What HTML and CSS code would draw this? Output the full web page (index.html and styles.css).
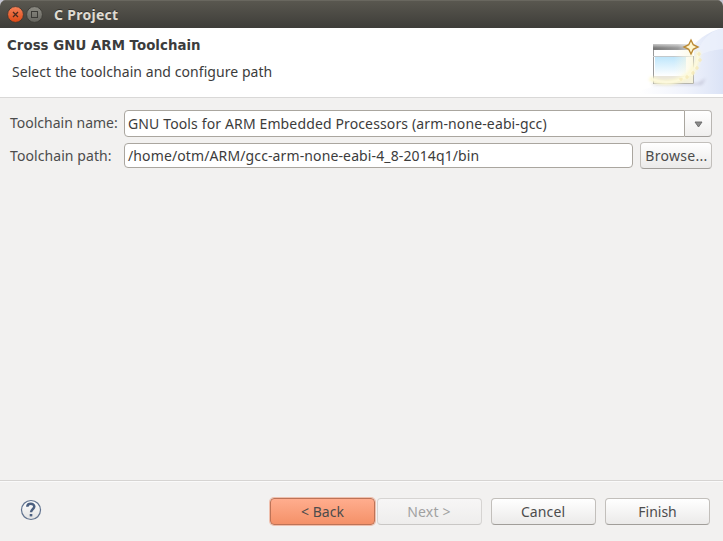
FILE: index.html
```html
<!DOCTYPE html>
<html lang="en">
<head>
<meta charset="utf-8">
<title>C Project</title>
<link rel="stylesheet" href="styles.css">
</head>
<body>
<div class="window">
  <div class="titlebar">
    <svg class="controls" width="38" height="28" viewBox="0 0 38 28">
      <defs>
        <linearGradient id="close" x1="0" y1="0" x2="0" y2="1"><stop offset="0" stop-color="#f58259"/><stop offset="1" stop-color="#dd4814"/></linearGradient>
        <linearGradient id="max" x1="0" y1="0" x2="0" y2="1"><stop offset="0" stop-color="#8c8b83"/><stop offset="1" stop-color="#65645e"/></linearGradient>
      </defs>
      <circle cx="9.500" cy="14.500" r="7.900" fill="url(#close)" stroke="#383530" stroke-width=".8"/>
      <path d="M7 12l5 5M12 12l-5 5" stroke="#4a2a1e" stroke-width="1.3"/>
      <circle cx="28.500" cy="14.500" r="7.900" fill="url(#max)" stroke="#383732" stroke-width=".8"/>
      <rect x="25.500" y="11.500" width="6" height="6" fill="none" stroke="#3b3a36"/>
    </svg>
    <span class="title">C Project</span>
  </div>
  <div class="header">
    <div class="heading">
      <h1>Cross GNU ARM Toolchain</h1>
      <p>Select the toolchain and configure path</p>
    </div>
    <svg class="banner" width="83" height="69" viewBox="0 0 83 69">
      <defs>
        <linearGradient id="sky" x1="0" y1="0" x2="1" y2="0"><stop offset="0" stop-color="#fff"/><stop offset=".55" stop-color="#f0f3fc"/><stop offset="1" stop-color="#dbe3f6"/></linearGradient>
        <linearGradient id="bar" x1="0" y1="0" x2="1" y2="0"><stop offset="0" stop-color="#777"/><stop offset=".6" stop-color="#999"/><stop offset="1" stop-color="#e5e5e5"/></linearGradient>
        <linearGradient id="barv" x1="0" y1="0" x2="0" y2="1"><stop offset="0" stop-color="#fff" stop-opacity=".6"/><stop offset="1" stop-color="#fff" stop-opacity="0"/></linearGradient>
        <linearGradient id="pane" x1="0" y1="0" x2="0" y2="1"><stop offset="0" stop-color="#bfe6fb"/><stop offset="1" stop-color="#fff"/></linearGradient>
        <linearGradient id="fade" x1="0" y1="0" x2="1" y2="0"><stop offset="0" stop-color="#fdfbea" stop-opacity="0"/><stop offset="1" stop-color="#fbf8dc"/></linearGradient>
        <filter id="soft" x="-30%" y="-30%" width="160%" height="160%"><feGaussianBlur stdDeviation="1.8"/></filter>
      </defs>
      <path d="M0 66V62C34 56 38 39 46 28C55 12 67 4 83 0V66Z" fill="url(#sky)"/>
      <path d="M56 29Q68 22 83 21V0Q62 5 56 29Z" fill="#eef2fc" opacity=".7"/>
      <path d="M14 55H58L66 50L62 57H11Z" fill="#8683a0" opacity=".3" filter="url(#soft)"/>
      <rect x="13" y="16" width="41" height="40" fill="#fff"/>
      <rect x="13" y="16" width="41" height="6" fill="url(#bar)"/>
      <rect x="13" y="16" width="41" height="4" fill="url(#barv)"/>
      <rect x="13" y="48" width="40" height="7" fill="#eae6da"/>
      <path d="M53.500 28V55.500H13.500" fill="none" stroke="#b5b4ac"/>
      <path d="M13.500 22V56" fill="none" stroke="#999"/>
      <path d="M13 28.500H53" fill="none" stroke="#c2c8cb"/>
      <rect x="15" y="29" width="31" height="19" fill="url(#pane)"/>
      <rect x="34" y="22" width="19" height="33" fill="url(#fade)" opacity=".8"/>
      <path d="M10 50Q20 57 36 53Q58 48 58 23" fill="none" stroke="#fcf8d2" stroke-width="5" filter="url(#soft)"/>
      <path d="M12 51Q23 56 36 53Q58 47 58 24" fill="none" stroke="#fdfae2" stroke-width="2" opacity=".6"/>
      <path d="M59 24v4m-2-2h4M60 30v4m-2-2h4M57 38v4m-2-2h4M53 43v4m-2-2h4M47 47v4m-2-2h4M41 50v3m-2-2h4" stroke="#f6e9b8" stroke-width="1.200"/>
      <path d="M51 12L53.300 16.700L58 19L53.300 21.300L51 26L48.700 21.300L44 19L48.700 16.700Z" fill="#fff6cf" stroke="#bb8a35" stroke-width="1.400"/>
    </svg>
  </div>
  <div class="form">
    <label class="t-name">Toolchain name:</label>
    <div class="combo"><div class="value"><span class="t-gnu">GNU Tools for ARM Embedded Processors (arm-none-eabi-gcc)</span></div><div class="drop"><svg width="9" height="7" viewBox="0 0 9 7"><path d="M1 1H8L4.500 6Z" fill="#8c8c8c" stroke="#666" stroke-width=".9"/></svg></div></div>
    <label class="t-path">Toolchain path:</label>
    <div class="path-row"><div class="field"><span class="t-home">/home/otm/ARM/gcc-arm-none-eabi-4_8-2014q1/bin</span></div><div class="button browse"><span>Browse...</span></div></div>
  </div>
  <div class="footer">
    <svg class="help" width="22" height="22" viewBox="0 0 22 22"><defs><linearGradient id="hg" x1="0" y1="0" x2="0" y2="1"><stop offset="0" stop-color="#fff"/><stop offset="1" stop-color="#e2e2e2"/></linearGradient></defs><circle cx="11" cy="11" r="9.500" fill="url(#hg)" stroke="#61738f" stroke-width="1.200"/><path d="M7.300 7.700C7.300 3.700 14.300 3.700 14.300 7.600C14.300 10 11 10.300 11 13.300" fill="none" stroke="#4c6080" stroke-width="2.500"/><rect x="9.700" y="15" width="2.600" height="2.400" fill="#4c6080"/></svg>
    <div class="button back"><span>&lt; Back</span></div>
    <div class="button next"><span>Next &gt;</span></div>
    <div class="button cancel"><span>Cancel</span></div>
    <div class="button finish"><span>Finish</span></div>
  </div>
</div>
</body>
</html>
```
FILE: styles.css
```css
* { box-sizing: border-box; }
body { margin: 0; background: #c5c5d2; font: 14px/20px "Noto Sans", sans-serif; color: #3c3c3c; }
.window { width: 723px; height: 541px; display: flex; flex-direction: column; background: #f2f1f0; border-radius: 6px 6px 0 0; overflow: hidden; white-space: nowrap; }
.titlebar { height: 28px; flex: none; display: flex; align-items: center; padding-left: 6px; background: linear-gradient(#5a5850, #3e3d39); box-shadow: inset 0 1px #69675f; }
.title { margin: 1px 0 0 10px; font-weight: 700; color: #dfdbd2; text-shadow: 0 -1px #33322e; letter-spacing: .28px; }
.header { height: 70px; flex: none; display: flex; justify-content: space-between; background: #fff; border-bottom: 1px solid #d9d8d7; }
.heading { padding: 9px 0 0 7px; }
h1 { margin: 0; font: 700 13.333px/18px "DejaVu Sans", sans-serif; letter-spacing: .04px; }
p { margin: 7px 0 0 5px; letter-spacing: .06px; }
.form { flex: 1; padding: 12px 11px 0 10px; display: grid; grid-template-columns: 114px 588px; grid-template-rows: 27px 27px; row-gap: 5px; align-content: start; align-items: center; }
label { color: #4c4c4c; }
.t-name { padding-bottom: 2px; }
.t-path { letter-spacing: .08px; }
.t-gnu { letter-spacing: .132px; }
.t-home { letter-spacing: .12px; }
.combo { height: 27px; display: flex; }
.value, .field { display: flex; align-items: center; background: #fff; border: 1px solid #aaa69f; padding-left: 3px; }
.value { flex: 1; border-radius: 4px 0 0 4px; }
.drop { width: 27px; border: 1px solid #b9b6b2; border-bottom-color: #a19e9a; border-left: 0; border-radius: 0 4px 4px 0; display: flex; align-items: center; justify-content: center; background: linear-gradient(#fff, #f0efee); padding-top: 2px; }
.path-row { display: flex; justify-content: space-between; align-items: center; }
.field { width: 509px; height: 25px; border-radius: 4px; }
.button { height: 27px; width: 105px; display: flex; align-items: center; justify-content: center; border: 1px solid #c2bfbb; border-bottom-color: #a19e9a; border-radius: 4px; background: linear-gradient(#fff, #ebeae9); color: #4c4c4c; }
.browse { width: 72px; letter-spacing: .3px; }
.browse span { margin-right: -1px; }
.footer { height: 61px; flex: none; display: flex; align-items: flex-start; border-top: 1px solid #d6d4d2; box-shadow: inset 0 1px #fafafa; padding: 17px 13px 0 20px; }
.help { margin: 1px auto 0 0; }
.back { border-color: #bd7357; background: linear-gradient(#ffad8e, #f49168); box-shadow: 0 0 0 1px #efc0ae; margin-right: 2px; }
.next { color: #a1a1a1; background: linear-gradient(#f7f6f6, #eeedec); border-color: #d6d4d2; border-bottom-color: #c9c7c5; margin-right: 9px; letter-spacing: .2px; }
.next span, .cancel span { margin-right: 1px; }
.cancel { margin-right: 9px; letter-spacing: .1px; }
```
